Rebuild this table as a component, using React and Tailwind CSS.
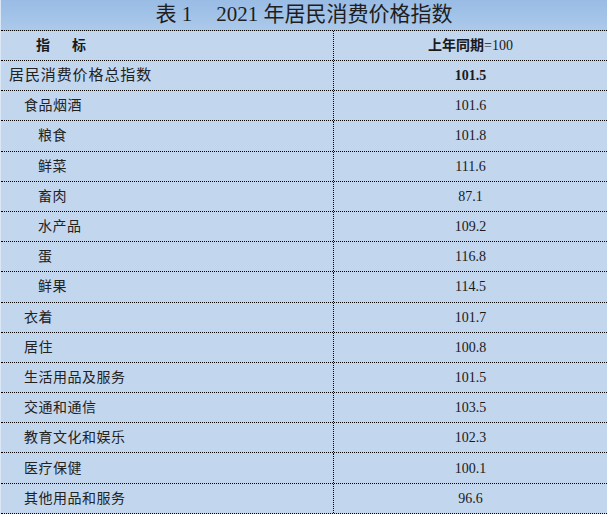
const rows = [
  { name: "居民消费价格总指数", value: "101.5", level: 0, bold: true },
  { name: "食品烟酒", value: "101.6", level: 1 },
  { name: "粮食", value: "101.8", level: 2 },
  { name: "鲜菜", value: "111.6", level: 2 },
  { name: "畜肉", value: "87.1", level: 2 },
  { name: "水产品", value: "109.2", level: 2 },
  { name: "蛋", value: "116.8", level: 2 },
  { name: "鲜果", value: "114.5", level: 2 },
  { name: "衣着", value: "101.7", level: 1 },
  { name: "居住", value: "100.8", level: 1 },
  { name: "生活用品及服务", value: "101.5", level: 1 },
  { name: "交通和通信", value: "103.5", level: 1 },
  { name: "教育文化和娱乐", value: "102.3", level: 1 },
  { name: "医疗保健", value: "100.1", level: 1 },
  { name: "其他用品和服务", value: "96.6", level: 1 },
];

const serif = { fontFamily: '"Liberation Serif", "Noto Sans CJK SC", serif' };

function Row({ row }) {
  const indent =
    row.level === 0 ? "pl-[8px] text-[15px] tracking-[0.9px]" : row.level === 1 ? "pl-[23px] text-[14px] tracking-[0.5px]" : "pl-[37px] text-[14px] tracking-[0.5px]";
  return (
    <div className="flex h-[30.2px] border-b border-dotted border-black">
      <div className={`w-[333px] flex items-center border-r border-dotted border-black text-[#222] ${indent}`}>
        {row.name}
      </div>
      <div className={`flex-1 flex items-center justify-center text-[14px] text-[#1a1a1a] ${row.bold ? "font-bold" : ""}`}>
        {row.value}
      </div>
    </div>
  );
}

export default function App() {
  return (
    <div className="w-[610px] h-[517px] bg-white overflow-hidden" style={serif}>
      <div className="w-[607px] bg-[#c2d6ee] border-l border-[#dbe7f5]">
        <div className="h-[31px] flex items-center justify-center bg-gradient-to-b from-[#99bce5] to-[#abc9ea] border-b border-dotted border-black text-[21px] text-[#1e1e1e]">
          <span>表 1</span>
          <span className="ml-[24px]">2021 年居民消费价格指数</span>
        </div>
        <div className="flex h-[30px] border-b border-dotted border-black">
          <div className="w-[333px] flex items-center pl-[35px] border-r border-dotted border-black text-[14px] font-bold text-[#1a1a1a]">
            <span>指</span>
            <span className="ml-[22px]">标</span>
          </div>
          <div className="flex-1 flex items-center justify-center text-[14px] text-[#1a1a1a]">
            <span className="font-bold">上年同期</span>
            <span>=100</span>
          </div>
        </div>
        {rows.map((r) => (
          <Row key={r.name} row={r} />
        ))}
      </div>
    </div>
  );
}
